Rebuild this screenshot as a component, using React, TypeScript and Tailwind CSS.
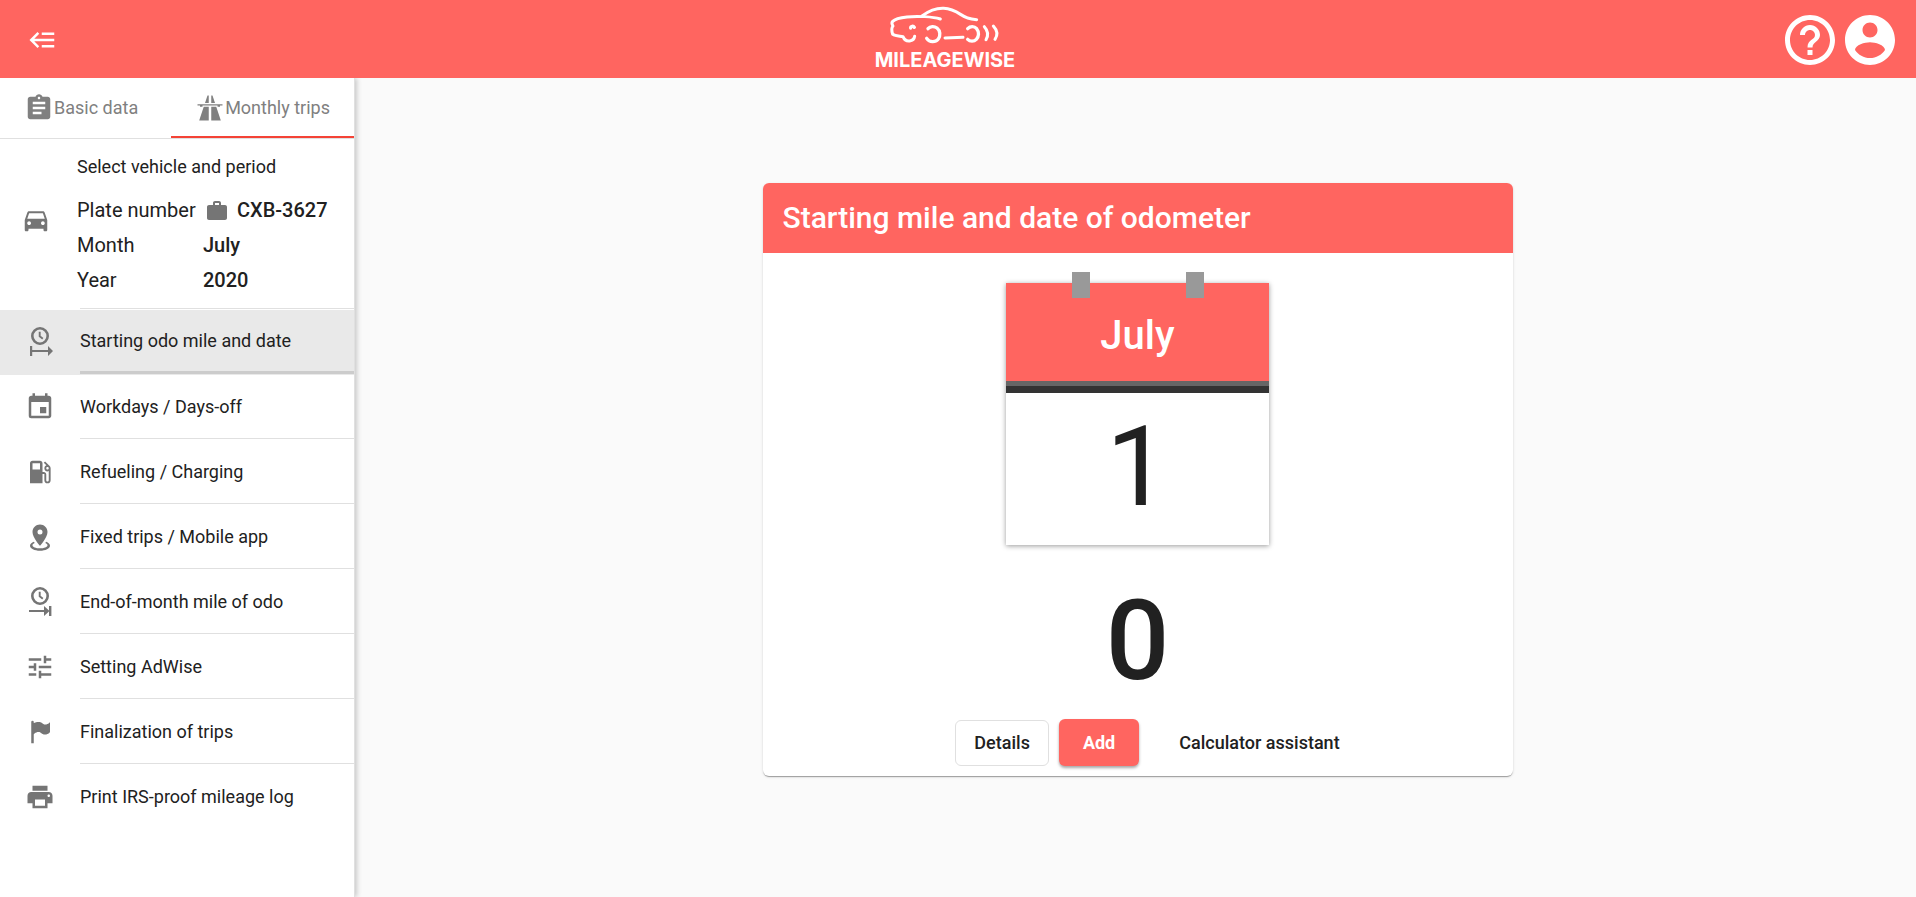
import type { ReactNode } from 'react';
import {
  MdAssignment,
  MdDirectionsCar,
  MdEvent,
  MdHelpOutline,
  MdLocalGasStation,
  MdPrint,
  MdTune,
  MdWork,
} from 'react-icons/md';

// Base wrapper for the icons that the md set does not have
const Icon = ({ size = 30, children }: { size?: number; children: ReactNode }) => (
  <svg width={size} height={size} viewBox="0 0 24 24" fill="currentColor" aria-hidden="true">
    {children}
  </svg>
);

const CloseMenuIcon = () => (
  <Icon>
    <path d="M5,13L9,17L7.6,18.42L1.18,12L7.6,5.58L9,7L5,11H21V13H5M21,6V8H11V6H21M21,16V18H11V16H21Z" />
  </Icon>
);

const AccountIcon = () => (
  <Icon size={60}>
    <path d="M12 2C6.48 2 2 6.48 2 12s4.48 10 10 10 10-4.48 10-10S17.52 2 12 2zm0 3c1.66 0 3 1.34 3 3s-1.34 3-3 3-3-1.34-3-3 1.34-3 3-3zm0 14.2c-2.5 0-4.71-1.28-6-3.22.03-1.99 4-3.08 6-3.08 1.99 0 5.97 1.09 6 3.08-1.29 1.94-3.5 3.22-6 3.22z" />
  </Icon>
);

const HighwayIcon = () => (
  <Icon>
    <path d="M10,2L8,8H11V2H10M13,2V8H16L14,2H13M2,9V10H4V11H6V10H18L18.06,11H20V10H22V9H2M7,11L3.34,22H11V11H7M13,11V22H20.66L17,11H13Z" />
  </Icon>
);

const FlagIcon = () => (
  <Icon>
    <path d="M6,3A1,1 0 0,1 7,4V4.88C8.06,4.44 9.5,4 11,4C14,4 14,6 16,6C19,6 20,4 20,4V12C20,12 19,14 16,14C13,14 13,12 11,12C8,12 7,14 7,14V21H5V4A1,1 0 0,1 6,3Z" />
  </Icon>
);

const PinIcon = () => (
  <Icon>
    <path d="M12,2C15.31,2 18,4.66 18,7.95C18,12.41 12,19 12,19C12,19 6,12.41 6,7.95C6,4.66 8.69,2 12,2M12,6A2,2 0 0,0 10,8A2,2 0 0,0 12,10A2,2 0 0,0 14,8A2,2 0 0,0 12,6M20,19C20,21.21 16.42,23 12,23C7.58,23 4,21.21 4,19C4,17.71 5.22,16.56 7.11,15.83L7.75,16.74C6.67,17.19 6,17.81 6,18.5C6,19.88 8.69,21 12,21C15.31,21 18,19.88 18,18.5C18,17.81 17.33,17.19 16.25,16.74L16.89,15.83C18.78,16.56 20,17.71 20,19Z" />
  </Icon>
);

// Clock above an arrow that leaves (start) or reaches (end) a bar
const OdometerIcon = ({ end = false }: { end?: boolean }) => (
  <svg width="30" height="30" viewBox="0 0 30 30" aria-hidden="true">
    <circle cx="15" cy="9" r="7.7" fill="none" stroke="currentColor" strokeWidth="2.6" />
    <path d="M14.7 4.8V9.3L17.8 11.8" fill="none" stroke="currentColor" strokeWidth="1.9" />
    {end ? (
      <path d="M4 23h15v-4l5 4.4v-4.4h2.4v10h-2.4v-4.4l-5 4.4v-4H4z" fill="currentColor" />
    ) : (
      <path d="M5 19h2.2v4H23v-4l5 5-5 5v-4H7.2v4H5z" fill="currentColor" />
    )}
  </svg>
);

const Logo = () => (
  <a href="#" className="flex flex-col items-center pb-1 text-white">
    <svg width="116" height="44" viewBox="80 6 348 132" fill="none" stroke="currentColor" strokeWidth="9" strokeLinecap="round" strokeLinejoin="round" aria-hidden="true">
      <path d="M240 57C218 50 170 47 140 51C122 53 104 57 97 64C92 69 95 73 98 78C92 84 94 93 97 103C105 108 118 108 128 110C132 120 140 124 148 123C157 122 162 116 163 109" />
      <path d="M185 48C204 34 226 24 250 25C288 27 304 50 322 54C332 57 340 58 349 59" />
      <path d="M151 84C151 78 159 77 162 82" strokeWidth="10" />
      <path d="M203 86C210 78 222 78 230 84C240 92 241 107 234 117C225 128 208 128 199 115" strokeWidth="10" />
      <path d="M254 114L308 112" />
      <path d="M322 86C330 78 342 78 349 86C357 96 356 110 348 118C341 125 329 125 322 118" strokeWidth="10" />
      <path d="M372 80C383 92 384 107 377 119" />
      <path d="M399 78C411 91 412 106 404 118" />
    </svg>
    <span className="font-[Inter,sans-serif] text-xl leading-7 font-bold">MILEAGEWISE</span>
  </a>
);

const menu = [
  { label: 'Starting odo mile and date', icon: <OdometerIcon />, active: true },
  { label: 'Workdays / Days-off', icon: <MdEvent size={30} /> },
  { label: 'Refueling / Charging', icon: <MdLocalGasStation size={30} /> },
  { label: 'Fixed trips / Mobile app', icon: <PinIcon /> },
  { label: 'End-of-month mile of odo', icon: <OdometerIcon end /> },
  { label: 'Setting AdWise', icon: <MdTune size={30} /> },
  { label: 'Finalization of trips', icon: <FlagIcon /> },
  { label: 'Print IRS-proof mileage log', icon: <MdPrint size={30} /> },
];

const Header = () => (
  <header className="relative z-20 flex h-[78px] items-center bg-[#ff6560] pt-0.5 text-white">
    <div className="w-[110px] pl-7">
      <button type="button" aria-label="Close menu" className="block">
        <CloseMenuIcon />
      </button>
    </div>
    <div className="flex flex-1 justify-center">
      <Logo />
    </div>
    <div className="flex pr-4">
      <button type="button" aria-label="Help">
        <MdHelpOutline size={60} />
      </button>
      <button type="button" aria-label="Account">
        <AccountIcon />
      </button>
    </div>
  </header>
);

const Sidebar = () => (
  <aside className="z-10 w-[355px] shrink-0 border-r border-[#e0e0e0] bg-white shadow-[2px_0_5px_rgba(0,0,0,0.2)]">
    <div className="flex h-[61px] border-b border-[#e0e0e0] text-lg text-[#808080]">
      <button type="button" className="flex flex-1 items-center pl-6">
        <MdAssignment size={30} />
        Basic data
      </button>
      <button type="button" className="flex items-center border-b-2 border-[#f44336] px-6 pt-0.5">
        <HighwayIcon />
        Monthly trips
      </button>
    </div>

    {/* Vehicle and period */}
    <div className="flex items-start">
      <div className="w-[77px] pt-[66px] pl-[21px] text-[#757575]">
        <MdDirectionsCar size={30} />
      </div>
      <div className="flex-1 pt-3 pb-[10px]">
        <h2 className="text-lg leading-8">Select vehicle and period</h2>
        <dl className="grid grid-cols-[126px_1fr] pt-[10px] text-xl leading-[35px]">
          <dt>Plate number</dt>
          <dd className="flex items-center gap-2 pl-0.5 font-medium">
            <MdWork size={24} className="text-[#757575]" />
            CXB-3627
          </dd>
          <dt>Month</dt>
          <dd className="font-medium">July</dd>
          <dt>Year</dt>
          <dd className="font-medium">2020</dd>
        </dl>
      </div>
    </div>
    <div className="mb-px ml-20 border-b border-[#e0e0e0]" />

    <nav>
      {menu.map((item) => (
        <a
          key={item.label}
          href="#"
          className={`group flex h-[65px] items-stretch pb-px text-lg ${item.active ? 'bg-[#e9e9e9]' : ''}`}
        >
          <span className="flex w-20 items-center justify-center text-[#757575]">{item.icon}</span>
          <span
            className={`flex flex-1 items-center ${
              item.active ? 'border-b-3 border-[#cccccc]' : 'border-b border-[#e0e0e0] group-last:border-transparent'
            }`}
          >
            {item.label}
          </span>
        </a>
      ))}
    </nav>
  </aside>
);

const Calendar = () => (
  <div className="relative w-[263px] bg-white text-center shadow-[0_1px_5px_rgba(0,0,0,0.4)]">
    <div className="absolute -top-[11px] left-[66px] h-[26px] w-[18px] bg-[#999999]" />
    <div className="absolute -top-[11px] right-[65px] h-[26px] w-[18px] bg-[#999999]" />
    <div className="flex h-[98px] items-center justify-center bg-[#ff6560] pt-2 text-[40px] font-medium text-white">
      July
    </div>
    <div className="h-[5px] bg-[#666666]" />
    <div className="h-[7px] bg-[#333333]" />
    <div className="flex h-[152px] items-center justify-center pb-1 text-[112px] leading-none">1</div>
  </div>
);

export default function App() {
  return (
    <div className="flex min-h-screen flex-col bg-[#fafafa] font-[Roboto,sans-serif] text-[#212121]">
      <Header />
      <div className="flex flex-1">
        <Sidebar />
        <main className="flex flex-1 items-center justify-center pb-4 pl-1">
          <section className="w-full max-w-[750px] rounded-md bg-white shadow-[0_2px_1px_-1px_rgba(0,0,0,0.2),0_1px_1px_rgba(0,0,0,0.14),0_1px_3px_rgba(0,0,0,0.12)]">
            <h1 className="flex h-[70px] items-center rounded-t-md bg-[#ff6560] px-5 text-3xl font-medium text-white">
              Starting mile and date of odometer
            </h1>
            <div className="flex flex-col items-center pt-[30px] pb-[10px]">
              <Calendar />
              <p className="mt-10 text-[112px] leading-[112px] font-medium">0</p>
              <div className="mt-[22px] flex items-center pl-9 text-lg font-medium">
                <button type="button" className="h-[46px] rounded-md border border-[#e0e0e0] px-[18px]">
                  Details
                </button>
                <button
                  type="button"
                  className="ml-[10px] h-[47px] rounded-md bg-[#ff6560] px-6 font-bold text-white shadow-[0_2px_3px_rgba(0,0,0,0.35)]"
                >
                  Add
                </button>
                <button type="button" className="ml-6 px-4">
                  Calculator assistant
                </button>
              </div>
            </div>
          </section>
        </main>
      </div>
    </div>
  );
}
